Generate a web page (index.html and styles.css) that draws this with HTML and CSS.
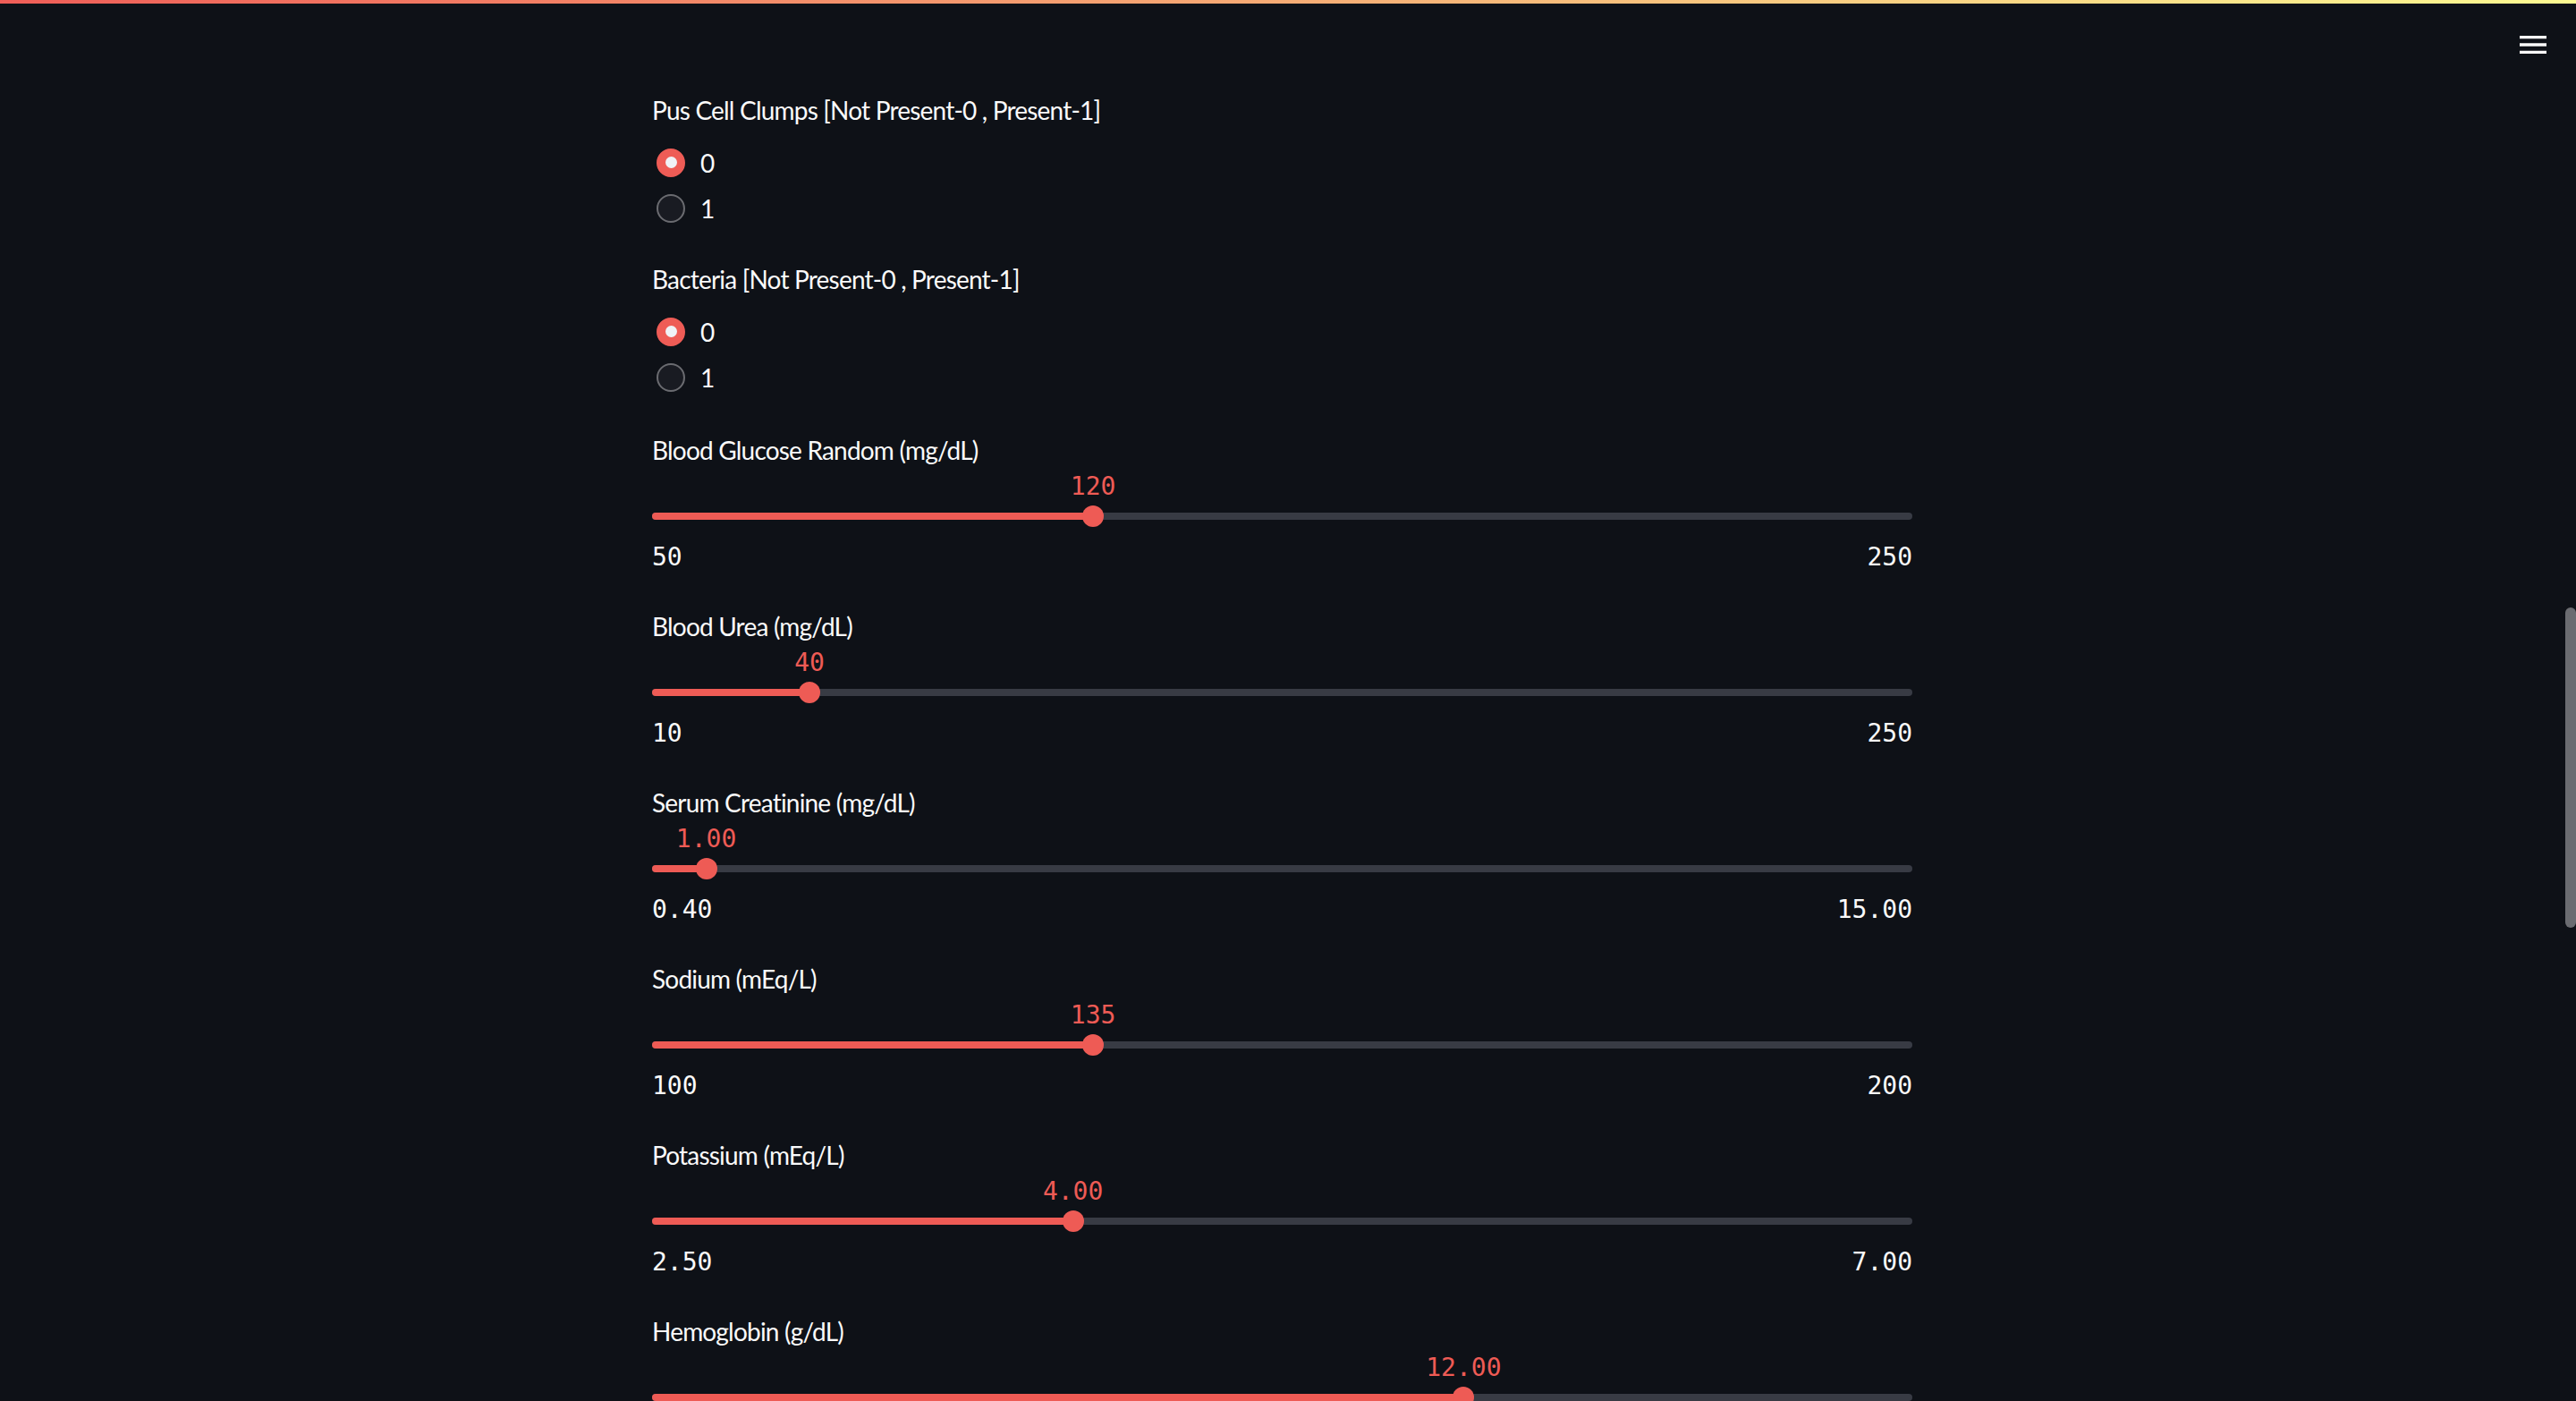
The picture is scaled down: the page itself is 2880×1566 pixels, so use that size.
FILE: index.html
```html
<!DOCTYPE html>
<html lang="en">
<head>
<meta charset="utf-8">
<title>Kidney Disease Prediction</title>
<link rel="stylesheet" href="styles.css">
</head>
<body>
<div class="decoration"></div>
<header class="app-header">
  <button class="menu-btn" aria-label="Main menu">
    <svg viewBox="0 0 24 24" width="40" height="40"><path fill="#fafafa" d="M3 18h18v-2H3v2zm0-5h18v-2H3v2zm0-7v2h18V6H3z"/></svg>
  </button>
</header>
<main class="main">
  <section class="block">
    <div class="widget radio-group">
      <div class="wlabel">Pus Cell Clumps [Not Present-0 , Present-1]</div>
      <div class="options">
        <div class="opt checked"><span class="dot"></span><span class="opt-text">0</span></div>
        <div class="opt"><span class="dot"></span><span class="opt-text">1</span></div>
      </div>
    </div>
    <div class="widget radio-group">
      <div class="wlabel">Bacteria [Not Present-0 , Present-1]</div>
      <div class="options">
        <div class="opt checked"><span class="dot"></span><span class="opt-text">0</span></div>
        <div class="opt"><span class="dot"></span><span class="opt-text">1</span></div>
      </div>
    </div>
    <div class="widget slider first-slider">
      <div class="wlabel">Blood Glucose Random (mg/dL)</div>
      <div class="value-row"><span class="value" style="left:35%">120</span></div>
      <div class="track"><div class="fill" style="width:35%"></div><div class="thumb" style="left:35%"></div></div>
      <div class="ticks"><span>50</span><span>250</span></div>
    </div>
    <div class="widget slider">
      <div class="wlabel">Blood Urea (mg/dL)</div>
      <div class="value-row"><span class="value" style="left:12.5%">40</span></div>
      <div class="track"><div class="fill" style="width:12.5%"></div><div class="thumb" style="left:12.5%"></div></div>
      <div class="ticks"><span>10</span><span>250</span></div>
    </div>
    <div class="widget slider">
      <div class="wlabel">Serum Creatinine (mg/dL)</div>
      <div class="value-row"><span class="value" style="left:4.3%">1.00</span></div>
      <div class="track"><div class="fill" style="width:4.3%"></div><div class="thumb" style="left:4.3%"></div></div>
      <div class="ticks"><span>0.40</span><span>15.00</span></div>
    </div>
    <div class="widget slider">
      <div class="wlabel">Sodium (mEq/L)</div>
      <div class="value-row"><span class="value" style="left:35%">135</span></div>
      <div class="track"><div class="fill" style="width:35%"></div><div class="thumb" style="left:35%"></div></div>
      <div class="ticks"><span>100</span><span>200</span></div>
    </div>
    <div class="widget slider">
      <div class="wlabel">Potassium (mEq/L)</div>
      <div class="value-row"><span class="value" style="left:33.4%">4.00</span></div>
      <div class="track"><div class="fill" style="width:33.4%"></div><div class="thumb" style="left:33.4%"></div></div>
      <div class="ticks"><span>2.50</span><span>7.00</span></div>
    </div>
    <div class="widget slider">
      <div class="wlabel">Hemoglobin (g/dL)</div>
      <div class="value-row"><span class="value" style="left:64.4%">12.00</span></div>
      <div class="track"><div class="fill" style="width:64.4%"></div><div class="thumb" style="left:64.4%"></div></div>
    </div>
  </section>
</main>
<div class="scroll-thumb"></div>
</body>
</html>
```

FILE: styles.css
```css
html, body {
  margin: 0;
  padding: 0;
  background: #0e1117;
  color: #fafafa;
  font-family: "Lato", "Source Sans Pro", "Noto Sans", sans-serif;
  overflow: hidden;
  height: 1566px;
}

.decoration {
  position: fixed;
  top: 0;
  left: 0;
  right: 0;
  height: 4px;
  background: linear-gradient(90deg, #ef5e58, #fdfa92);
  z-index: 10;
}

.app-header {
  position: fixed;
  top: 0;
  right: 0;
  left: 0;
  height: 92px;
  z-index: 5;
}

.menu-btn {
  position: absolute;
  top: 30px;
  right: 28px;
  width: 40px;
  height: 40px;
  padding: 0;
  border: 0;
  background: transparent;
  display: block;
}
.menu-btn svg { display: block; }

.main {
  padding-right: 13px;
  padding-top: 101px;
}

.block {
  width: 1409px;
  margin: 0 auto;
  display: flex;
  flex-direction: column;
}

.wlabel {
  font-size: 28px;
  line-height: 44px;
  height: 44px;
  white-space: nowrap;
  letter-spacing: -0.8px;
}

/* radio */
.radio-group {
  margin-bottom: 32px;
}

.options {
  margin-top: 11px;
  display: flex;
  flex-direction: column;
}

.opt {
  height: 51px;
  display: flex;
  align-items: center;
  padding-left: 5px;
}

.dot {
  width: 32px;
  height: 32px;
  border-radius: 50%;
  box-sizing: border-box;
  border: 2px solid #6a6b70;
  background: #191b22;
  display: flex;
  align-items: center;
  justify-content: center;
  flex: none;
}
.opt.checked .dot {
  background: #ee5c56;
  border-color: #ee5c56;
}
.opt.checked .dot::after {
  content: "";
  width: 13px;
  height: 13px;
  border-radius: 50%;
  background: #f0f2f6;
}

.opt-text {
  margin-left: 17px;
  font-size: 28px;
  line-height: 44px;
}

/* slider */
.first-slider { margin-top: 2px; }

.slider {
  margin-bottom: 38px;
}

.value-row {
  position: relative;
  height: 48px;
}
.value {
  position: absolute;
  top: 2px;
  transform: translateX(-50%);
  font-family: "DejaVu Sans Mono", "Liberation Mono", monospace;
  font-size: 28px;
  line-height: 34px;
  color: #ee5b55;
  white-space: nowrap;
}

.track {
  position: relative;
  height: 8px;
  border-radius: 4px;
  background: #383b44;
}
.fill {
  height: 8px;
  border-radius: 4px;
  background: #ee5b55;
}
.thumb {
  position: absolute;
  top: -8px;
  width: 24px;
  height: 24px;
  margin-left: -12px;
  border-radius: 50%;
  background: #ee5b55;
}

.ticks {
  margin-top: 25px;
  display: flex;
  justify-content: space-between;
  font-family: "DejaVu Sans Mono", "Liberation Mono", monospace;
  font-size: 28px;
  line-height: 34px;
  color: #fafafa;
}

.scroll-thumb {
  position: fixed;
  right: 0;
  top: 679px;
  width: 12px;
  height: 358px;
  border-radius: 6px;
  background: #6b6c71;
  z-index: 6;
}
```
